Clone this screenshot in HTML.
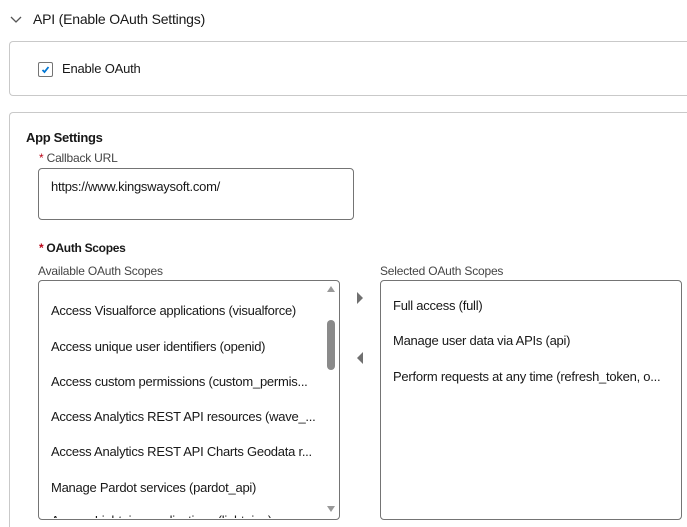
<!DOCTYPE html>
<html><head><style>
html,body{margin:0;width:687px;height:527px;overflow:hidden}
body{background:#fff;font-family:"Liberation Sans",sans-serif;color:#181818;font-size:13px;position:relative}
.a{position:absolute;white-space:nowrap}
.card{position:absolute;border:1px solid #c9c9c9;border-radius:4px;background:#fff}
.box{position:absolute;border:1px solid #747474;border-radius:4px;background:#fff;overflow:hidden}
.item{position:absolute;left:12px;white-space:nowrap;font-size:13px;letter-spacing:-0.25px}
.lbl{color:#444;font-size:12px;letter-spacing:-0.2px}
.req{color:#ba0517}
</style></head><body>
<svg class="a" style="left:10px;top:15px" width="12" height="10"><path d="M1 2 L6 7 L11 2" stroke="#555" stroke-width="1.3" fill="none"/></svg>
<div class="a" style="left:33px;top:11px;font-size:14px;letter-spacing:-0.2px">API (Enable OAuth Settings)</div>
<div class="card" style="left:9px;top:41px;width:677px;height:53px;border-right:none;border-radius:4px 0 0 4px"></div>
<div class="a" style="left:38px;top:62px;width:13px;height:13px;border:1px solid #747474;border-radius:2px"></div>
<svg class="a" style="left:40px;top:64px" width="11" height="11"><path d="M2.5 6 L4.5 8 L8.5 3" stroke="#0176d3" stroke-width="1.8" fill="none"/></svg>
<div class="a" style="left:62px;top:61px;letter-spacing:-0.2px">Enable OAuth</div>
<div class="card" style="left:9px;top:112px;width:677px;height:414px;border-right:none;border-bottom:none;border-radius:4px 0 0 0"></div>
<div class="a" style="left:26px;top:130px;font-weight:bold;font-size:13px;letter-spacing:-0.3px">App Settings</div>
<div class="a lbl" style="left:39px;top:151px"><span class="req">*</span> Callback URL</div>
<div class="box" style="left:38px;top:168px;width:314px;height:50px"><div class="item" style="top:10px">https://www.kingswaysoft.com/</div></div>
<div class="a" style="left:39px;top:241px;font-weight:bold;font-size:12px;letter-spacing:-0.3px"><span class="req">*</span> OAuth Scopes</div>
<div class="a lbl" style="left:38px;top:264px">Available OAuth Scopes</div>
<div class="a lbl" style="left:380px;top:264px">Selected OAuth Scopes</div>
<div class="box" style="left:38px;top:280px;width:300px;height:238px">
<div class="item" style="top:22px">Access Visualforce applications (visualforce)</div>
<div class="item" style="top:58px">Access unique user identifiers (openid)</div>
<div class="item" style="top:93px">Access custom permissions (custom_permis...</div>
<div class="item" style="top:128px">Access Analytics REST API resources (wave_...</div>
<div class="item" style="top:163px">Access Analytics REST API Charts Geodata r...</div>
<div class="item" style="top:199px">Manage Pardot services (pardot_api)</div>
<div class="item" style="top:232px;height:5px;overflow:hidden">Access Lightning applications (lightning)</div>
<div style="position:absolute;left:288px;top:39px;width:8px;height:50px;background:#8a8a8a;border-radius:4px"></div>
<svg style="position:absolute;left:287px;top:4px" width="10" height="8"><path d="M1 7 L5 1 L9 7Z" fill="#999"/></svg>
<svg style="position:absolute;left:287px;top:224px" width="10" height="8"><path d="M1 1 L5 7 L9 1Z" fill="#999"/></svg>
</div>
<svg class="a" style="left:356px;top:292px" width="8" height="12"><path d="M1 0 L7 6 L1 12Z" fill="#707070"/></svg>
<svg class="a" style="left:356px;top:352px" width="8" height="12"><path d="M7 0 L1 6 L7 12Z" fill="#707070"/></svg>
<div class="box" style="left:380px;top:280px;width:300px;height:238px">
<div class="item" style="top:17px">Full access (full)</div>
<div class="item" style="top:52px">Manage user data via APIs (api)</div>
<div class="item" style="top:88px">Perform requests at any time (refresh_token, o...</div>
</div>
</body></html>
